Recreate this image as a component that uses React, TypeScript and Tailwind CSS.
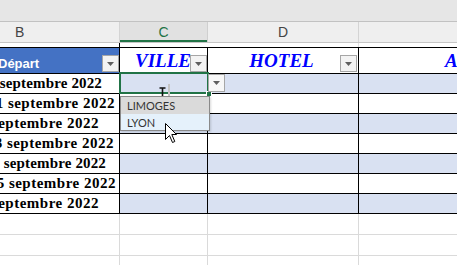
import React from "react";

const serif = { fontFamily: '"Liberation Serif", "Times New Roman", serif' };
const sans = { fontFamily: '"Liberation Sans", Arial, sans-serif' };
const ui = { fontFamily: 'Lato, "Noto Sans", sans-serif' };

function Tri({ color = "#5f5f5f" }: { color?: string }) {
  return (
    <svg width="7" height="4" viewBox="0 0 7 4">
      <path d="M0 0 H7 L3.5 4 Z" fill={color} />
    </svg>
  );
}

function FilterBtn({ className = "" }: { className?: string }) {
  return (
    <div
      className={
        "absolute w-[17px] h-[17px] border border-[#a6a6a6] bg-[#f3f3f3] flex items-center justify-center " +
        className
      }
    >
      <Tri />
    </div>
  );
}

const dates = [
  { t: "septembre 2022", pr: 17, tr: "tracking-[0.15px]" },
  { t: "1 septembre 2022", pr: 4, tr: "tracking-[0.5px]" },
  { t: "septembre 2022", pr: 20, tr: "tracking-[0.5px]" },
  { t: "3 septembre 2022", pr: 5, tr: "tracking-[0.5px]" },
  { t: "septembre 2022", pr: 13, tr: "tracking-[0.15px]" },
  { t: "5 septembre 2022", pr: 3, tr: "tracking-[0.5px]" },
  { t: "septembre 2022", pr: 20, tr: "tracking-[0.5px]" },
];

export default function App() {
  return (
    <div className="relative w-[457px] h-[265px] overflow-hidden bg-white">
      {/* ribbon bottom band */}
      <div className="h-[22px] bg-[#e6e6e6] border-b border-[#c2c2c2]" />

      {/* column headers */}
      <div className="flex h-[21px] border-b border-[#c6c6c6] bg-[#efefef]" style={{ ...sans }}>
        <div className="w-[120px] shrink-0 border-r border-[#d4d4d4] flex items-center pl-[15px] text-[14px] leading-none text-[#444]">
          B
        </div>
        <div className="relative w-[88px] shrink-0 border-r border-[#cfcfcf] bg-[#e1e1e1] flex items-center justify-center text-[14px] leading-none text-[#217346]">
          C
          <div className="absolute left-0 right-0 bottom-0 h-[2px] bg-[#217346]" />
        </div>
        <div className="w-[151px] shrink-0 border-r border-[#d4d4d4] flex items-center justify-center text-[14px] leading-none text-[#444]">
          D
        </div>
        <div className="flex-1" />
      </div>

      {/* partial row above table */}
      <div className="flex h-[4px]">
        <div className="w-[120px] shrink-0 border-r border-black" />
        <div className="w-[88px] shrink-0" />
        <div className="w-[151px] shrink-0 border-r border-[#e0e0e0]" />
        <div className="flex-1" />
      </div>

      {/* table header row */}
      <div className="flex h-[27px] border-y border-black">
        <div className="relative w-[120px] shrink-0 border-r border-black bg-[#4472c4] flex items-end pb-[3px] overflow-hidden">
          <span className="ml-[-2px] text-white font-bold text-[13px] leading-none whitespace-nowrap" style={sans}>
            Départ
          </span>
          <FilterBtn className="right-0 bottom-[1px]" />
        </div>
        <div className="relative w-[88px] shrink-0 border-r border-black flex items-end justify-center pb-[3px]">
          <span className="text-[#0000ff] font-bold italic text-[19px] leading-none pr-[1px]" style={serif}>
            VILLE
          </span>
          <FilterBtn className="right-0 bottom-[1px]" />
        </div>
        <div className="relative w-[151px] shrink-0 border-r border-black flex items-end justify-center pb-[3px]">
          <span className="text-[#0000ff] font-bold italic text-[19px] leading-none pr-[3px]" style={serif}>
            HOTEL
          </span>
          <FilterBtn className="right-[1px] bottom-[1px]" />
        </div>
        <div className="flex-1 flex items-end pb-[3px] pl-[86px] overflow-hidden">
          <span className="text-[#0000ff] font-bold italic text-[19px] leading-none whitespace-nowrap" style={serif}>
            ACTIVITES
          </span>
        </div>
      </div>

      {/* data rows */}
      {dates.map((d, i) => {
        const fill = i % 2 === 0 ? "bg-[#d9e1f2]" : "bg-white";
        return (
          <div key={i} className="flex h-[20px] border-b border-black">
            <div
              className="w-[120px] shrink-0 border-r border-black flex items-end justify-end pb-[2px] overflow-hidden"
              style={{ paddingRight: d.pr }}
            >
              <span
                className={"shrink-0 font-bold text-[15px] leading-none text-black whitespace-nowrap " + d.tr}
                style={serif}
              >
                {d.t}
              </span>
            </div>
            <div className={"w-[88px] shrink-0 border-r border-black " + fill} />
            <div className={"w-[151px] shrink-0 border-r border-black " + fill} />
            <div className={"flex-1 " + fill} />
          </div>
        );
      })}

      {/* empty grid rows */}
      {[0, 1, 2].map((i) => (
        <div key={i} className="flex h-[21px] border-b border-[#dadada]">
          <div className="w-[120px] shrink-0 border-r border-[#dadada]" />
          <div className="w-[88px] shrink-0 border-r border-[#dadada]" />
          <div className="w-[151px] shrink-0 border-r border-[#dadada]" />
          <div className="flex-1" />
        </div>
      ))}

      {/* selection border */}
      <div className="absolute left-[119px] top-[72px] w-[90px] h-[22px] border-2 border-[#217346]" />
      <div className="absolute left-[206px] top-[91px] w-[6px] h-[6px] bg-[#217346] border border-white" />

      {/* I-beam and caret */}
      <svg className="absolute left-[159px] top-[87px]" width="7" height="10" viewBox="0 0 7 10">
        <path d="M0.5 1 H6.5 M3.5 1 V10" stroke="#111" strokeWidth="1.6" fill="none" />
      </svg>
      <div className="absolute left-[168px] top-[84px] w-[2px] h-[12px] bg-[#c4c4c4]" />

      {/* validation dropdown button */}
      <div className="absolute left-[208px] top-[74px] w-[17px] h-[18px] border border-[#a6a6a6] bg-[#f7f7f7] flex items-center justify-center">
        <Tri />
      </div>

      {/* dropdown list */}
      <div
        className="absolute left-[120px] top-[96px] w-[90px] h-[35px] border border-[#8a8a8a] bg-white shadow-[1px_1px_2px_rgba(0,0,0,0.15)] flex flex-col"
        style={ui}
      >
        <div className="h-[17px] bg-[#dadada] flex items-center pl-[6px] text-[11px] leading-none text-[#333]">
          LIMOGES
        </div>
        <div className="flex-1 bg-[#e5f1fb] flex items-center pl-[6px] text-[11px] leading-none text-[#333]">
          LYON
        </div>
      </div>

      {/* mouse pointer */}
      <svg className="absolute left-[165px] top-[123px]" width="13" height="21" viewBox="0 0 13 21">
        <path
          d="M0.5 0.5 L0.5 16.5 L4.5 12.5 L7.5 19.5 L9.8 18.5 L6.8 11.5 L11.5 11.5 Z"
          fill="#fff"
          stroke="#000"
          strokeWidth="1"
          strokeLinejoin="miter"
        />
      </svg>
    </div>
  );
}
